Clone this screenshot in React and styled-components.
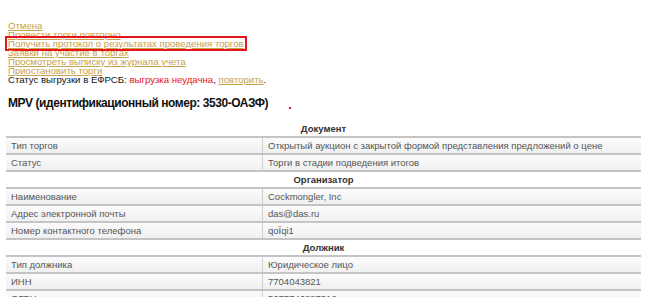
import React from "react";
import styled, { createGlobalStyle } from "styled-components";

const Global = createGlobalStyle`
  body {
    margin: 0;
    background: #fff;
    font-family: "Liberation Sans", Arial, sans-serif;
  }
`;

const Page = styled.div`
  padding: 21px 5px 0 6px;
  width: 645px;
  box-sizing: border-box;
`;

const Actions = styled.div`
  display: flex;
  flex-direction: column;
  align-items: flex-start;
  font-size: 9.6px;
  line-height: 9px;
  padding-left: 2px;
`;

const ActionLink = styled.a`
  color: #c9a14a;
  text-decoration: underline;
  cursor: pointer;
  outline: ${(p) => (p.$marked ? "2px solid #e3161b" : "none")};
  outline-offset: 1px;
`;

const StatusLine = styled.div`
  color: #111;
`;

const Failed = styled.span`
  color: #e3161b;
`;

const HeadRow = styled.div`
  position: relative;
  margin: 12px 0 0 2px;
`;

const Heading = styled.h2`
  margin: 0;
  font-family: "Liberation Sans Narrow", "Liberation Sans", Arial, sans-serif;
  font-size: 12px;
  line-height: 14px;
  letter-spacing: -0.45px;
  font-weight: bold;
  color: #111;
`;

const Dot = styled.span`
  position: absolute;
  display: block;
  left: 281px;
  top: 11px;
  width: 2px;
  height: 2px;
  background: #e3161b;
`;

const Table = styled.table`
  margin-top: 11px;
  width: 635px;
  border-collapse: collapse;
  font-size: 9.5px;
  color: #555;
`;

const SectionCell = styled.th`
  height: 15px;
  padding: 0;
  text-align: center;
  font-weight: bold;
  color: #333;
  border-bottom: 2px solid #c4c4c4;
`;

const Cell = styled.td`
  height: 15px;
  padding: 0 0 0 5px;
  background: linear-gradient(#fbfbfb, #f0f0f0);
  border-bottom: 2px solid #c4c4c4;
  width: ${(p) => (p.$label ? "251px" : "auto")};
  border-right: ${(p) => (p.$label ? "1px solid #cfcfcf" : "none")};
`;

const sections = [
  {
    title: "Документ",
    rows: [
      ["Тип торгов", "Открытый аукцион с закрытой формой представления предложений о цене"],
      ["Статус", "Торги в стадии подведения итогов"],
    ],
  },
  {
    title: "Организатор",
    rows: [
      ["Наименование", "Cockmongler, Inc"],
      ["Адрес электронной почты", "das@das.ru"],
      ["Номер контактного телефона", "qoÏqi1"],
    ],
  },
  {
    title: "Должник",
    rows: [
      ["Тип должника", "Юридическое лицо"],
      ["ИНН", "7704043821"],
      ["ОГРН", "5077746887312"],
    ],
  },
];

export default function App() {
  return (
    <Page>
      <Global />
      <Actions>
        <ActionLink>Отмена</ActionLink>
        <ActionLink>Провести торги повторно</ActionLink>
        <ActionLink $marked>Получить протокол о результатах проведения торгов</ActionLink>
        <ActionLink>Заявки на участие в торгах</ActionLink>
        <ActionLink>Просмотреть выписку из журнала учета</ActionLink>
        <ActionLink>Приостановить торги</ActionLink>
        <StatusLine>
          Статус выгрузки в ЕФРСБ: <Failed>выгрузка неудачна</Failed>,{" "}
          <ActionLink>повторить</ActionLink>.
        </StatusLine>
      </Actions>
      <HeadRow>
        <Heading>MPV (идентификационный номер: 3530-ОАЗФ)</Heading>
        <Dot />
      </HeadRow>
      <Table>
        <tbody>
          {sections.map((s) => (
            <React.Fragment key={s.title}>
              <tr>
                <SectionCell colSpan={2}>{s.title}</SectionCell>
              </tr>
              {s.rows.map(([k, v]) => (
                <tr key={k}>
                  <Cell $label>{k}</Cell>
                  <Cell>{v}</Cell>
                </tr>
              ))}
            </React.Fragment>
          ))}
        </tbody>
      </Table>
    </Page>
  );
}
